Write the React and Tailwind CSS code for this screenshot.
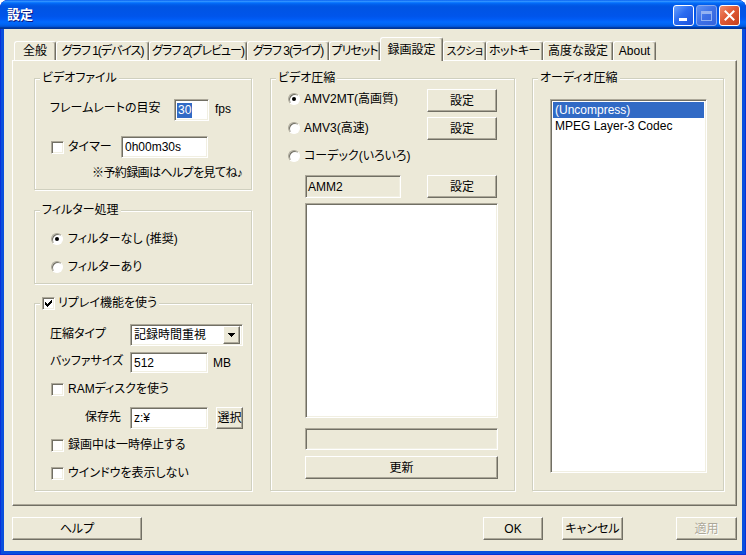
import React from 'react';

function Btn({ children, className = '', disabled = false }) {
  return (
    <div
      className={`flex items-center justify-center bg-[#ECE9D8] border border-t-white border-l-white border-r-[#716F64] border-b-[#716F64] shadow-[inset_-1px_-1px_0_#ACA899] ${
        disabled ? 'text-[#ACA899] [text-shadow:1px_1px_0_#fff]' : 'text-black'
      } ${className}`}
    >
      {children}
    </div>
  );
}

function Field({ children, className = '' }) {
  return (
    <div
      className={`flex items-center border border-t-[#ACA899] border-l-[#ACA899] border-r-white border-b-white shadow-[inset_1px_1px_0_#716F64,inset_-1px_-1px_0_#F1EFE2] ${className}`}
    >
      {children}
    </div>
  );
}

function Check({ checked = false }) {
  const cols = [2, 3, 4, 3, 2, 1, 0];
  return (
    <div className="w-[13px] h-[13px] shrink-0 bg-white border border-t-[#ACA899] border-l-[#ACA899] border-r-white border-b-white shadow-[inset_1px_1px_0_#716F64,inset_-1px_-1px_0_#F1EFE2] flex items-center justify-center">
      {checked && (
        <svg width="7" height="7" viewBox="0 0 7 7" shapeRendering="crispEdges">
          {cols.map((y, i) => (
            <rect key={i} x={i} y={y} width="1" height="3" fill="#000" />
          ))}
        </svg>
      )}
    </div>
  );
}

function Radio({ checked = false }) {
  return (
    <div className="w-[12px] h-[12px] shrink-0 rounded-full bg-white border border-t-[#ACA899] border-l-[#ACA899] border-r-white border-b-white shadow-[inset_1px_1px_0_#716F64] flex items-center justify-center">
      {checked && <div className="w-[4px] h-[4px] rounded-full bg-black" />}
    </div>
  );
}

function Group({ title, className = '', children }) {
  return (
    <div className={`relative border border-[#D0D0BF] shadow-[inset_1px_1px_0_#fff,1px_1px_0_#fff] ${className}`}>
      <div className="absolute left-[5px] -top-[8px] bg-[#ECE9D8] px-[2px] h-[14px] flex items-center whitespace-nowrap">
        {title}
      </div>
      {children}
    </div>
  );
}

const tabs = [
  ['全般', 'w-[42px]'],
  ['グラフ 1(デバイス)', 'w-[93px] tracking-[-1px]'],
  ['グラフ 2(プレビュー)', 'w-[98px] tracking-[-1px]'],
  ['グラフ 3(ライブ)', 'w-[82px] tracking-[-1px]'],
  ['プリセット', 'w-[51px] tracking-[-1px]'],
  ['録画設定', 'w-[63px]', true],
  ['スクショ', 'w-[43px] text-[11px] tracking-[-0.5px]'],
  ['ホットキー', 'w-[57px] tracking-[-0.5px]'],
  ['高度な設定', 'w-[70px]'],
  ['About', 'w-[43px]'],
];

export default function App() {
  return (
    <div className="w-[746px] h-[555px] flex flex-col rounded-t-[8px] bg-[#0A4FDD] shadow-[inset_1px_0_0_#0831D9,inset_-1px_0_0_#0831D9,inset_0_-1px_0_#0831D9] font-['Liberation_Sans','Noto_Sans_CJK_JP',sans-serif] text-[12px] leading-[14px] text-black [font-feature-settings:'palt'] overflow-hidden">
      {/* Title bar */}
      <div className="h-[29px] shrink-0 rounded-t-[8px] bg-[linear-gradient(to_bottom,#0058ee_0%,#3593ff_4%,#288eff_6%,#127dff_8%,#036ffc_10%,#0262ee_14%,#0057e5_20%,#0054e3_24%,#0055eb_56%,#005bf5_66%,#026afe_76%,#0062ef_86%,#0052d6_92%,#0040ab_94%,#003092_100%)] flex items-start pl-[7px] pr-[6px]">
        <span className="mt-[6px] text-white font-bold text-[13px] leading-[16px] [text-shadow:1px_1px_0_#0A1883] font-['Noto_Sans_CJK_JP',sans-serif]">
          設定
        </span>
        <div className="flex-1" />
        <div className="mt-[5px] flex gap-[2px]">
          <div className="w-[21px] h-[21px] rounded-[3px] border border-white bg-[linear-gradient(135deg,#6aa2ff_0%,#2b6cf0_45%,#1c52dc_100%)] flex items-end pl-[5px] pb-[4px]">
            <div className="w-[8px] h-[3px] bg-white" />
          </div>
          <div className="w-[21px] h-[21px] rounded-[3px] border border-[#8AA9EE] bg-[linear-gradient(135deg,#5f92f3_0%,#3d70e6_50%,#3463dd_100%)] flex items-center justify-center">
            <div className="w-[11px] h-[10px] border border-t-[3px] border-[#93B2F2]" />
          </div>
          <div className="w-[21px] h-[21px] rounded-[3px] border border-white bg-[linear-gradient(135deg,#f08c6e_0%,#e05a36_45%,#c53f1a_100%)] flex items-center justify-center">
            <svg width="11" height="11" viewBox="0 0 11 11">
              <path d="M1.5 1.5 L9.5 9.5 M9.5 1.5 L1.5 9.5" stroke="#fff" strokeWidth="2" strokeLinecap="square" />
            </svg>
          </div>
        </div>
      </div>

      {/* Body */}
      <div className="mx-[4px] mb-[4px] flex-1 bg-[#ECE9D8] flex flex-col">
        {/* Tabs */}
        <div className="mt-[8px] ml-[10px] h-[23px] flex items-end">
          {tabs.map(([label, w, sel]) => (
            <div
              key={label}
              className={`${w} ${
                sel ? 'h-[24px] -mb-[1px] relative z-10 pt-[1px]' : 'h-[19px]'
              } shrink-0 flex items-center justify-center bg-[#ECE9D8] border-t border-l border-r border-t-white border-l-white border-r-[#716F64] shadow-[inset_-1px_0_0_#ACA899] rounded-t-[3px] whitespace-nowrap overflow-hidden`}
            >
              {label}
            </div>
          ))}
        </div>

        {/* Panel */}
        <div className="ml-[8px] w-[725px] h-[446px] border border-t-white border-l-white border-r-[#716F64] border-b-[#716F64] shadow-[inset_-1px_-1px_0_#ACA899] flex pl-[21px] pt-[17px]">
          {/* Left column */}
          <div className="w-[218px] flex flex-col">
            <Group title="ビデオファイル" className="h-[112px] pt-[20px]">
              <div className="flex items-start pl-[15px]">
                <span className="w-[124px] mt-[2px] whitespace-nowrap">フレームレートの目安</span>
                <Field className="w-[35px] h-[22px] bg-white pl-[2px]">
                  <span className="bg-[#316AC5] text-white pl-[1px] pr-[1px] leading-[15px]">30</span>
                </Field>
                <span className="ml-[6px] mt-[3px]">fps</span>
              </div>
              <div className="flex items-center mt-[15px] pl-[16px]">
                <Check />
                <span className="ml-[4px] w-[53px]">タイマー</span>
                <Field className="w-[87px] h-[22px] bg-white pl-[3px]">0h00m30s</Field>
              </div>
              <div className="mt-[8px] pl-[57px] whitespace-nowrap tracking-[-0.6px]">※予約録画はヘルプを見てね♪</div>
            </Group>

            <Group title="フィルター処理" className="mt-[20px] h-[74px] pt-[20px]">
              <div className="flex items-center h-[16px] pl-[16px]">
                <Radio checked />
                <span className="ml-[5px]">フィルターなし (推奨)</span>
              </div>
              <div className="flex items-center h-[16px] mt-[12px] pl-[16px]">
                <Radio />
                <span className="ml-[5px]">フィルターあり</span>
              </div>
            </Group>

            <Group
              title={
                <>
                  <Check checked />
                  <span className="ml-[3px]">リプレイ機能を使う</span>
                </>
              }
              className="mt-[19px] h-[188px] pt-[20px]"
            >
              <div className="flex items-start pl-[15px]">
                <span className="w-[80px] mt-[3px]">圧縮タイプ</span>
                <Field className="w-[113px] h-[22px] bg-white pl-[3px] pr-[2px]">
                  <span className="flex-1">記録時間重視</span>
                  <Btn className="w-[17px] h-[18px]">
                    <svg width="7" height="4" viewBox="0 0 7 4" shapeRendering="crispEdges">
                      <path d="M0 0 H7 L3.5 4 Z" fill="#000" />
                    </svg>
                  </Btn>
                </Field>
              </div>
              <div className="flex items-start mt-[6px] pl-[15px]">
                <span className="w-[80px] mt-[2px]">バッファサイズ</span>
                <Field className="w-[78px] h-[21px] bg-white pl-[3px]">512</Field>
                <span className="ml-[5px] mt-[4px]">MB</span>
              </div>
              <div className="flex items-center h-[16px] mt-[8px] pl-[16px]">
                <Check />
                <span className="ml-[4px]">RAMディスクを使う</span>
              </div>
              <div className="flex items-start mt-[10px] pl-[15px]">
                <span className="w-[80px] pl-[35px] mt-[3px]">保存先</span>
                <Field className="w-[78px] h-[22px] bg-white pl-[3px]">z:¥</Field>
                <Btn className="ml-[8px] w-[27px] h-[22px]">選択</Btn>
              </div>
              <div className="flex items-center h-[16px] mt-[8px] pl-[16px]">
                <Check />
                <span className="ml-[4px]">録画中は一時停止する</span>
              </div>
              <div className="flex items-center h-[16px] mt-[12px] pl-[16px]">
                <Check />
                <span className="ml-[4px]">ウインドウを表示しない</span>
              </div>
            </Group>
          </div>

          {/* Middle column */}
          <Group title="ビデオ圧縮" className="ml-[18px] w-[245px] h-[413px] pt-[10px]">
            <div className="flex items-start pl-[17px]">
              <div className="w-[139px] mt-[2px] h-[16px] flex items-center">
                <Radio checked />
                <span className="ml-[4px]">AMV2MT(高画質)</span>
              </div>
              <Btn className="w-[70px] h-[23px]">設定</Btn>
            </div>
            <div className="flex items-start mt-[5px] pl-[17px]">
              <div className="w-[139px] mt-[3px] h-[16px] flex items-center">
                <Radio />
                <span className="ml-[4px]">AMV3(高速)</span>
              </div>
              <Btn className="w-[70px] h-[23px]">設定</Btn>
            </div>
            <div className="flex items-center h-[16px] mt-[8px] pl-[17px]">
              <Radio />
              <span className="ml-[4px]">コーデック(いろいろ)</span>
            </div>
            <div className="flex items-start mt-[11px] pl-[34px]">
              <Field className="w-[96px] h-[23px] bg-[#ECE9D8] pl-[2px]">AMM2</Field>
              <Btn className="ml-[26px] w-[70px] h-[23px]">設定</Btn>
            </div>
            <Field className="mt-[5px] ml-[34px] w-[193px] h-[215px] bg-white" />
            <Field className="mt-[10px] ml-[34px] w-[193px] h-[22px] bg-[#ECE9D8]" />
            <Btn className="mt-[6px] ml-[34px] w-[193px] h-[23px]">更新</Btn>
          </Group>

          {/* Right column */}
          <Group title="オーディオ圧縮" className="ml-[17px] w-[192px] h-[413px] pt-[20px] pl-[17px]">
            <div className="w-[157px] h-[374px] bg-white border border-t-[#ACA899] border-l-[#ACA899] border-r-white border-b-white shadow-[inset_1px_1px_0_#716F64,inset_-1px_-1px_0_#F1EFE2] p-[2px] flex flex-col">
              <div className="h-[16px] flex items-center pl-[2px] bg-[#316AC5] text-white">(Uncompress)</div>
              <div className="h-[16px] flex items-center pl-[2px]">MPEG Layer-3 Codec</div>
            </div>
          </Group>
        </div>

        {/* Bottom buttons */}
        <div className="mt-[11px] ml-[8px] mr-[5px] flex">
          <Btn className="w-[130px] h-[23px]">ヘルプ</Btn>
          <div className="flex-1" />
          <Btn className="w-[60px] h-[23px]">OK</Btn>
          <Btn className="ml-[19px] w-[61px] h-[23px]">キャンセル</Btn>
          <Btn className="ml-[53px] w-[61px] h-[23px]" disabled>
            適用
          </Btn>
        </div>
      </div>
    </div>
  );
}
